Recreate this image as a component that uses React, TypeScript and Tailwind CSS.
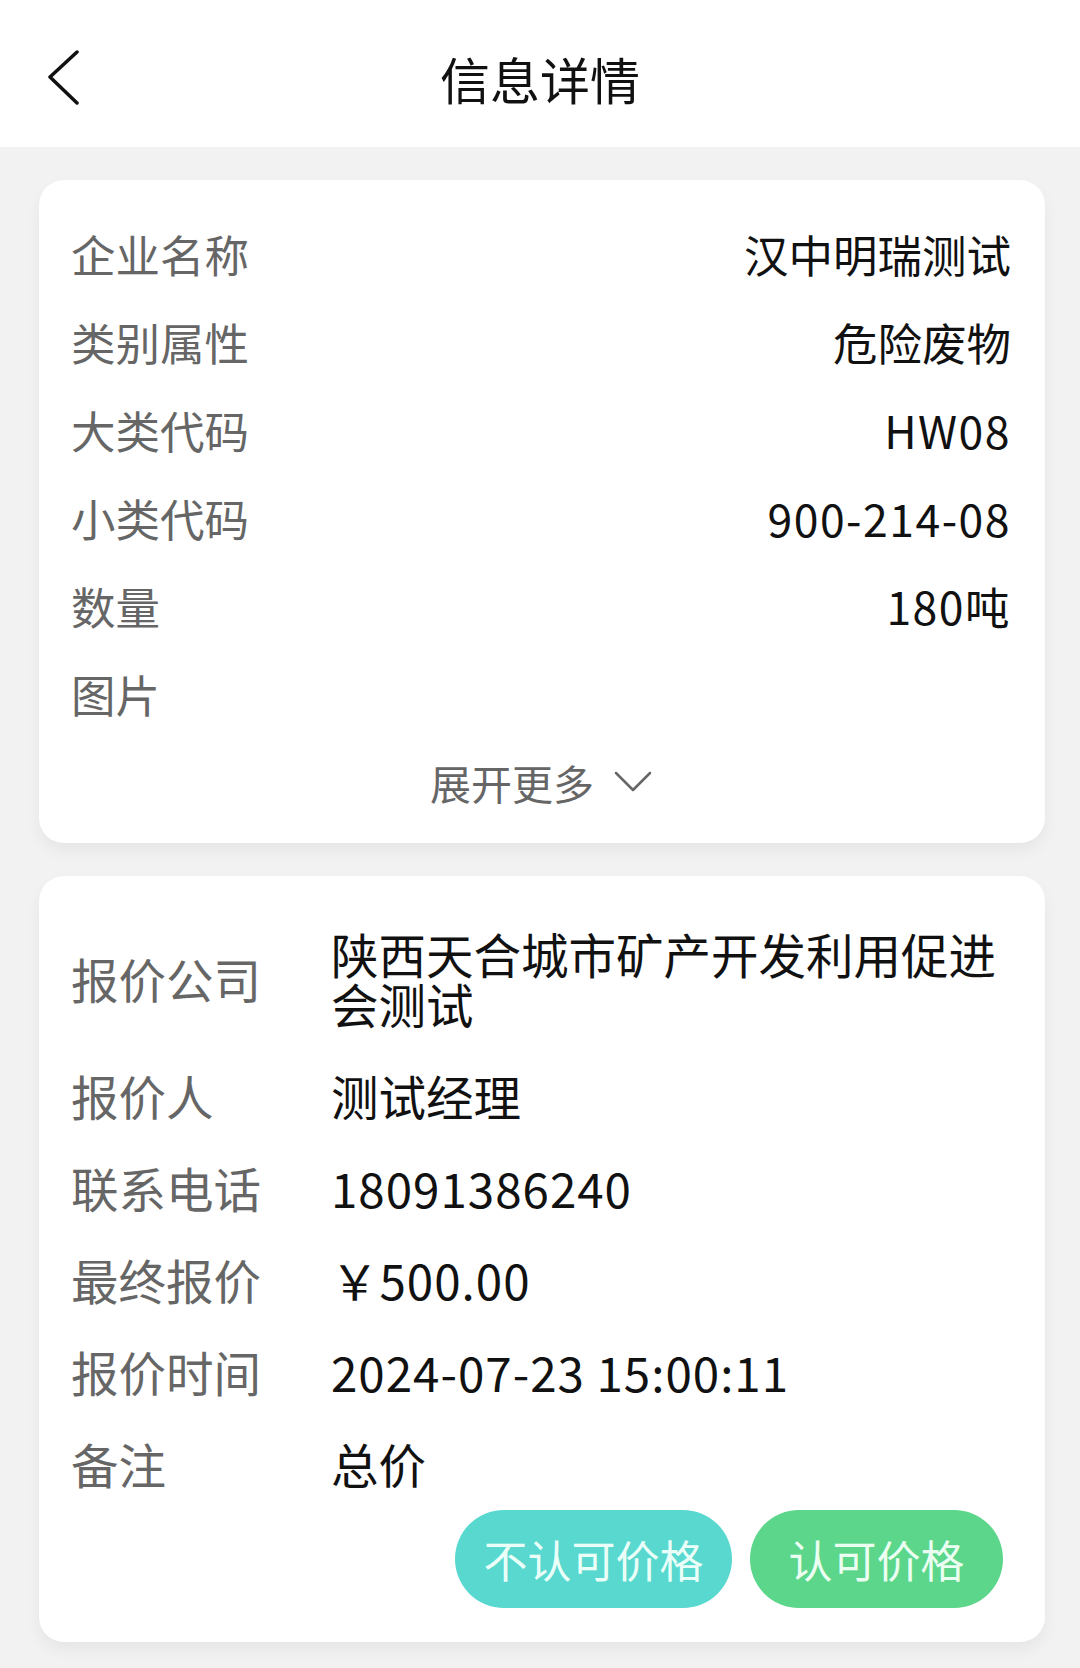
import React from "react";

type Item = {
  label: string;
  value: string;
  num?: boolean;
};

const basicInfo: Item[] = [
  { label: "企业名称", value: "汉中明瑞测试" },
  { label: "类别属性", value: "危险废物" },
  { label: "大类代码", value: "HW08", num: true },
  { label: "小类代码", value: "900-214-08", num: true },
  { label: "数量", value: "180吨", num: true },
  { label: "图片", value: "" },
];

const quoteInfo: Item[] = [
  { label: "报价公司", value: "陕西天合城市矿产开发利用促进会测试" },
  { label: "报价人", value: "测试经理" },
  { label: "联系电话", value: "18091386240", num: true },
  { label: "最终报价", value: "￥500.00", num: true },
  { label: "报价时间", value: "2024-07-23 15:00:11", num: true },
  { label: "备注", value: "总价" },
];

const font = {
  fontFamily: '"Noto Sans CJK SC", "Noto Sans", sans-serif',
};

export default function App() {
  return (
    <div className="min-h-[1668px] bg-[#f2f2f2]" style={font}>
      {/* Header */}
      <header className="flex h-[147px] items-center bg-white pt-[8px]">
        <button className="flex w-[120px] items-center pl-[46px]">
          <svg width="34" height="56" viewBox="0 0 34 56" fill="none">
            <path
              d="M31 2 L4 27 L31 53"
              stroke="#111"
              strokeWidth="3.5"
              strokeLinecap="round"
              strokeLinejoin="round"
            />
          </svg>
        </button>
        <h1 className="flex-1 text-center text-[50px] leading-none text-[#111]">
          信息详情
        </h1>
        <div className="w-[120px]" />
      </header>

      <div className="flex flex-col gap-[33px] pl-[39px] pr-[35px] pt-[33px] pb-[24px]">
        {/* Waste info card */}
        <section className="rounded-[25px] bg-white pl-[32px] pr-[34px] pt-[30px] pb-[17px] shadow-[0_8px_16px_rgba(0,0,0,0.05)]">
          {basicInfo.map((item) => (
            <div
              key={item.label}
              className="flex h-[88px] items-center justify-between text-[44.5px] leading-none"
            >
              <span className="text-[#666]">{item.label}</span>
              <span
                className={
                  item.num
                    ? "tracking-[1.5px] text-[#111]"
                    : "text-[#111]"
                }
              >
                {item.value}
              </span>
            </div>
          ))}
          <div className="flex h-[88px] items-center justify-center gap-[20px] text-[41px] leading-none text-[#666]">
            <span>展开更多</span>
            <svg width="38" height="22" viewBox="0 0 38 22" fill="none">
              <path
                d="M2 2 L19 19 L36 2"
                stroke="#666"
                strokeWidth="2.5"
                strokeLinecap="round"
                strokeLinejoin="round"
              />
            </svg>
          </div>
        </section>

        {/* Quote card */}
        <section className="rounded-[25px] bg-white pt-[32px] pb-[34px] pl-[32px] shadow-[0_8px_16px_rgba(0,0,0,0.05)]">
          <div className="pr-[34px]">
            {quoteInfo.map((item) => (
              <div
                key={item.label}
                className="flex items-center py-[21px] text-[47.5px] leading-[50px]"
              >
                <span className="w-[260px] shrink-0 text-[#666]">
                  {item.label}
                </span>
                <span
                  className={
                    item.num
                      ? "flex-1 tracking-[1px] text-[#111]"
                      : "flex-1 text-[#111]"
                  }
                >
                  {item.value}
                </span>
              </div>
            ))}
          </div>
          <div className="flex justify-end gap-[18px] pr-[42px]">
            <button className="flex h-[98px] w-[277px] items-center justify-center rounded-full bg-[#58d8cf] text-[44px] text-[#eafff8]">
              不认可价格
            </button>
            <button className="flex h-[98px] w-[253px] items-center justify-center rounded-full bg-[#5bd68a] text-[44px] text-[#eafff2]">
              认可价格
            </button>
          </div>
        </section>
      </div>
    </div>
  );
}
